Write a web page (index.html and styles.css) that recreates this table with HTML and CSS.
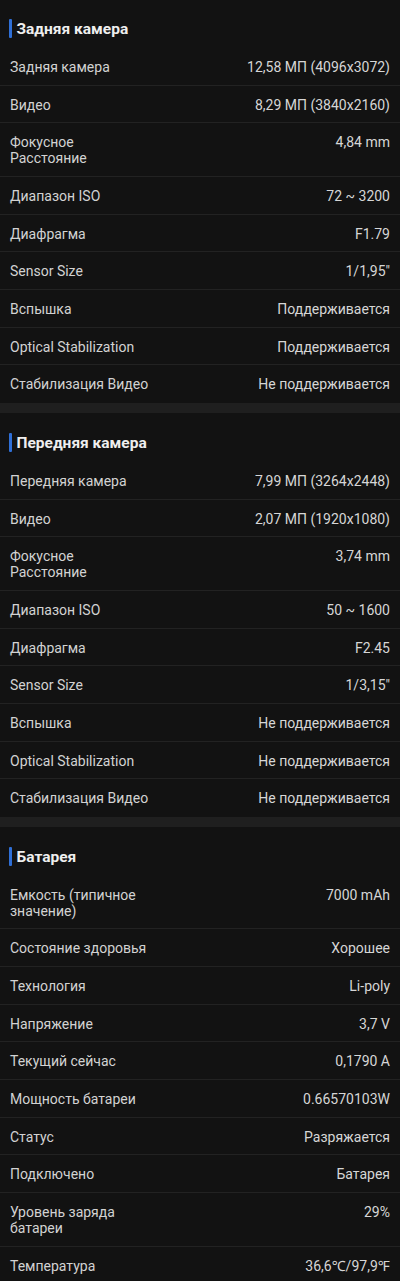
FILE: index.html
```html
<!DOCTYPE html>
<html lang="ru">
<head>
<meta charset="utf-8">
<link rel="stylesheet" href="styles.css">
</head>
<body>
<section class="sec">
  <h2 class="title">Задняя камера</h2>
  <div class="row"><span class="k">Задняя камера</span><span class="v">12,58 МП (4096x3072)</span></div>
  <div class="row"><span class="k">Видео</span><span class="v">8,29 МП (3840x2160)</span></div>
  <div class="row"><span class="k">Фокусное<br>Расстояние</span><span class="v">4,84 mm</span></div>
  <div class="row"><span class="k">Диапазон ISO</span><span class="v">72 ~ 3200</span></div>
  <div class="row"><span class="k">Диафрагма</span><span class="v">F1.79</span></div>
  <div class="row"><span class="k">Sensor Size</span><span class="v">1/1,95"</span></div>
  <div class="row"><span class="k">Вспышка</span><span class="v">Поддерживается</span></div>
  <div class="row"><span class="k">Optical Stabilization</span><span class="v">Поддерживается</span></div>
  <div class="row last"><span class="k">Стабилизация Видео</span><span class="v">Не поддерживается</span></div>
</section>
<div class="band"></div>
<section class="sec">
  <h2 class="title">Передняя камера</h2>
  <div class="row"><span class="k">Передняя камера</span><span class="v">7,99 МП (3264x2448)</span></div>
  <div class="row"><span class="k">Видео</span><span class="v">2,07 МП (1920x1080)</span></div>
  <div class="row"><span class="k">Фокусное<br>Расстояние</span><span class="v">3,74 mm</span></div>
  <div class="row"><span class="k">Диапазон ISO</span><span class="v">50 ~ 1600</span></div>
  <div class="row"><span class="k">Диафрагма</span><span class="v">F2.45</span></div>
  <div class="row"><span class="k">Sensor Size</span><span class="v">1/3,15"</span></div>
  <div class="row"><span class="k">Вспышка</span><span class="v">Не поддерживается</span></div>
  <div class="row"><span class="k">Optical Stabilization</span><span class="v">Не поддерживается</span></div>
  <div class="row last"><span class="k">Стабилизация Видео</span><span class="v">Не поддерживается</span></div>
</section>
<div class="band"></div>
<section class="sec">
  <h2 class="title">Батарея</h2>
  <div class="row"><span class="k">Емкость (типичное<br>значение)</span><span class="v">7000 mAh</span></div>
  <div class="row"><span class="k">Состояние здоровья</span><span class="v">Хорошее</span></div>
  <div class="row"><span class="k">Технология</span><span class="v">Li-poly</span></div>
  <div class="row"><span class="k">Напряжение</span><span class="v">3,7 V</span></div>
  <div class="row"><span class="k">Текущий сейчас</span><span class="v">0,1790 A</span></div>
  <div class="row"><span class="k">Мощность батареи</span><span class="v">0.66570103W</span></div>
  <div class="row"><span class="k">Статус</span><span class="v">Разряжается</span></div>
  <div class="row"><span class="k">Подключено</span><span class="v">Батарея</span></div>
  <div class="row"><span class="k">Уровень заряда<br>батареи</span><span class="v">29%</span></div>
  <div class="row last"><span class="k">Температура</span><span class="v">36,6℃/97,9℉</span></div>
</section>
</body>
</html>
```
FILE: styles.css
```css
html, body {
  margin: 0;
  padding: 0;
  background: #121212;
}
body {
  font-family: Roboto, "Noto Sans", sans-serif;
  color: #d6d6d6;
  width: 400px;
}
.sec {
  background: #121212;
}
.title {
  margin: 0;
  display: flex;
  align-items: center;
  height: 49px;
  padding: 21px 10px 9px 9px;
  box-sizing: border-box;
  font-size: 15.5px;
  line-height: 19px;
  font-weight: 700;
  color: #eeeeee;
}
.sec:first-child .title {
  height: 48px;
  padding-top: 20px;
}
.title::before {
  content: "";
  width: 2.5px;
  height: 19px;
  background: #2f6fd6;
  margin-right: 5px;
  margin-top: -2px;
  border-radius: 1px;
}
.row {
  display: flex;
  justify-content: space-between;
  align-items: flex-start;
  padding: 11px 10px 9.67px;
  border-bottom: 1px solid #222222;
  font-size: 14px;
  line-height: 16px;
}
.row.last {
  border-bottom-color: #121212;
}
.k {
  color: #d2d2d2;
}
.v {
  color: #d6d6d6;
  text-align: right;
}
.band {
  height: 10px;
  background: #1f1f1f;
}
```
